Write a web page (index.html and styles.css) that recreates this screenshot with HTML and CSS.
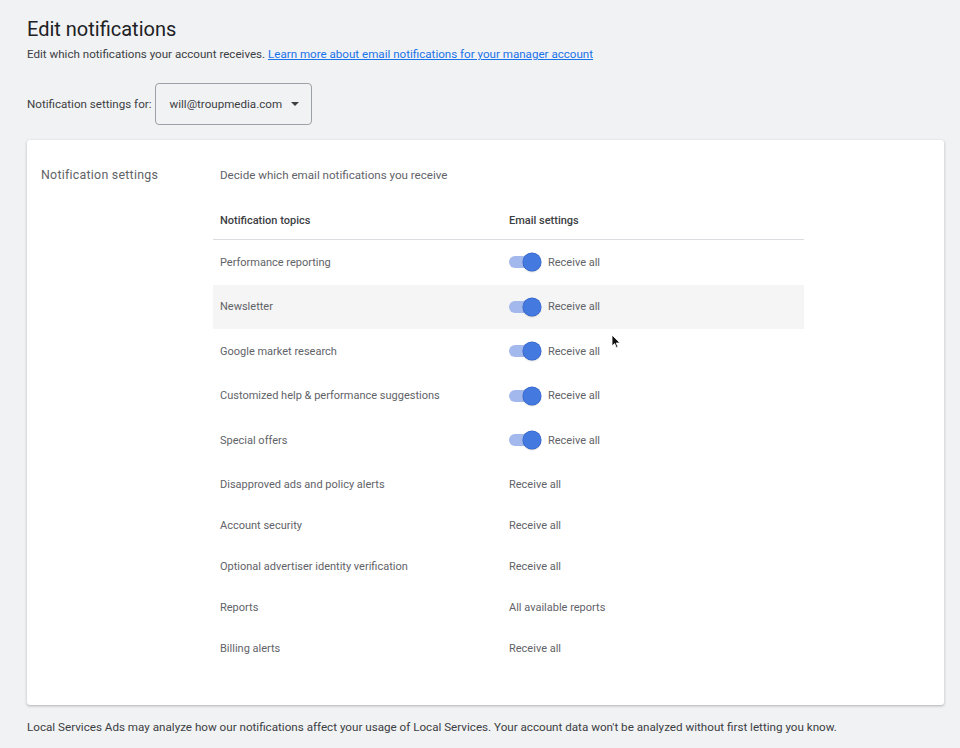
FILE: index.html
```html
<!DOCTYPE html>
<html lang="en">
<head>
<meta charset="utf-8">
<title>Edit notifications</title>
<link rel="stylesheet" href="styles.css">
</head>
<body>
<div class="page">
  <h1 class="title">Edit notifications</h1>
  <p class="subtitle">Edit which notifications your account receives. <a href="#" class="link">Learn more about email notifications for your manager account</a></p>

  <div class="account-row">
    <span class="account-label">Notification settings for:</span>
    <div class="select">
      <span>will@troupmedia.com</span>
      <svg class="caret" width="8" height="4" viewBox="0 0 8 4"><path d="M0 0h8L4 4z" fill="#3c4043"/></svg>
    </div>
  </div>

  <section class="card">
    <div class="card-label">Notification settings</div>
    <div class="card-body">
      <div class="intro">Decide which email notifications you receive</div>
      <div class="table">
        <div class="row head">
          <div class="c1">Notification topics</div>
          <div class="c2">Email settings</div>
        </div>
        <div class="row tall">
          <div class="c1">Performance reporting</div>
          <div class="c2"><span class="toggle"><span class="knob"></span></span>Receive all</div>
        </div>
        <div class="row tall hover">
          <div class="c1">Newsletter</div>
          <div class="c2"><span class="toggle"><span class="knob"></span></span>Receive all</div>
        </div>
        <div class="row tall">
          <div class="c1">Google market research</div>
          <div class="c2"><span class="toggle"><span class="knob"></span></span>Receive all</div>
        </div>
        <div class="row tall">
          <div class="c1">Customized help &amp; performance suggestions</div>
          <div class="c2"><span class="toggle"><span class="knob"></span></span>Receive all</div>
        </div>
        <div class="row tall">
          <div class="c1">Special offers</div>
          <div class="c2"><span class="toggle"><span class="knob"></span></span>Receive all</div>
        </div>
        <div class="row short">
          <div class="c1">Disapproved ads and policy alerts</div>
          <div class="c2">Receive all</div>
        </div>
        <div class="row short">
          <div class="c1">Account security</div>
          <div class="c2">Receive all</div>
        </div>
        <div class="row short">
          <div class="c1">Optional advertiser identity verification</div>
          <div class="c2">Receive all</div>
        </div>
        <div class="row short">
          <div class="c1">Reports</div>
          <div class="c2">All available reports</div>
        </div>
        <div class="row short">
          <div class="c1">Billing alerts</div>
          <div class="c2">Receive all</div>
        </div>
      </div>
    </div>
  </section>

  <p class="footer">Local Services Ads may analyze how our notifications affect your usage of Local Services. Your account data won't be analyzed without first letting you know.</p>

  <svg class="cursor" width="10" height="15" viewBox="0 0 10 15"><path d="M1 1v11l2.6-2.4 1.8 4.2 1.6-.7-1.8-4.1H9z" fill="#111" stroke="#fff" stroke-width="0.8"/></svg>
</div>
</body>
</html>
```

FILE: styles.css
```css
* { box-sizing: border-box; }
html, body { margin: 0; padding: 0; }
body {
  background: #f1f2f4;
  font-family: Roboto, "Noto Sans", Arial, sans-serif;
  color: #3c4043;
}
.page {
  position: relative;
  width: 960px;
  height: 748px;
  padding: 17px 16px 0 27px;
}
.title {
  margin: 0;
  font-size: 20px;
  font-weight: 400;
  line-height: 24px;
  color: #202124;
}
.subtitle {
  margin: 5px 0 0;
  font-size: 11.6px;
  line-height: 16px;
  color: #3c4043;
}
.link {
  color: #1a73e8;
  text-decoration: underline;
}
.account-row {
  display: flex;
  align-items: center;
  margin-top: 21px;
  gap: 3px;
}
.account-label {
  font-size: 11.6px;
  color: #3c4043;
}
.select {
  width: 157px;
  height: 42px;
  border: 1px solid #9aa0a6;
  border-radius: 4px;
  display: flex;
  align-items: center;
  padding-left: 14px;
  gap: 9px;
  font-size: 11.6px;
  color: #3c4043;
}
.caret { display: block; }
.card {
  margin-top: 15px;
  width: 917px;
  height: 565px;
  background: #fff;
  border-radius: 3px;
  box-shadow: 0 1px 2px rgba(60,64,67,0.25), 0 1px 3px 1px rgba(60,64,67,0.08);
  display: flex;
  padding-top: 27px;
}
.card-label {
  width: 186px;
  padding-left: 14px;
  font-size: 12.4px;
  line-height: 16px;
  letter-spacing: 0.25px;
  color: #5f6368;
}
.card-body { width: 591px; }
.intro {
  padding-left: 7px;
  font-size: 11.6px;
  line-height: 16px;
  color: #5f6368;
}
.row {
  display: flex;
  align-items: center;
  font-size: 11px;
  color: #5f6368;
}
.row .c1 { width: 296px; padding-left: 7px; }
.row .c2 { display: flex; align-items: center; }
.row.head {
  margin-top: 30px;
  padding-bottom: 10px;
  line-height: 16px;
  border-bottom: 1px solid #dadce0;
  color: #3c4043;
  font-weight: 500;
}
.row.tall { height: 44.5px; }
.row.hover { background: #f5f5f5; }
.row.short { height: 41.2px; }
.tall + .short { margin-top: 1px; }
.toggle {
  position: relative;
  width: 28px;
  height: 12px;
  border-radius: 6px;
  background: #a3b8ec;
  margin-right: 11px;
}
.knob {
  position: absolute;
  right: -4px;
  top: -3px;
  width: 18px;
  height: 18px;
  border-radius: 50%;
  background: #4479e0;
  box-shadow: 0 0 0 0.5px #2f5fc4, 0 1px 2px rgba(0,0,0,0.2);
}
.footer {
  margin: 14px 0 0;
  font-size: 11.65px;
  line-height: 16px;
  color: #3c4043;
}
.cursor {
  position: absolute;
  left: 611px;
  top: 334px;
}
```
